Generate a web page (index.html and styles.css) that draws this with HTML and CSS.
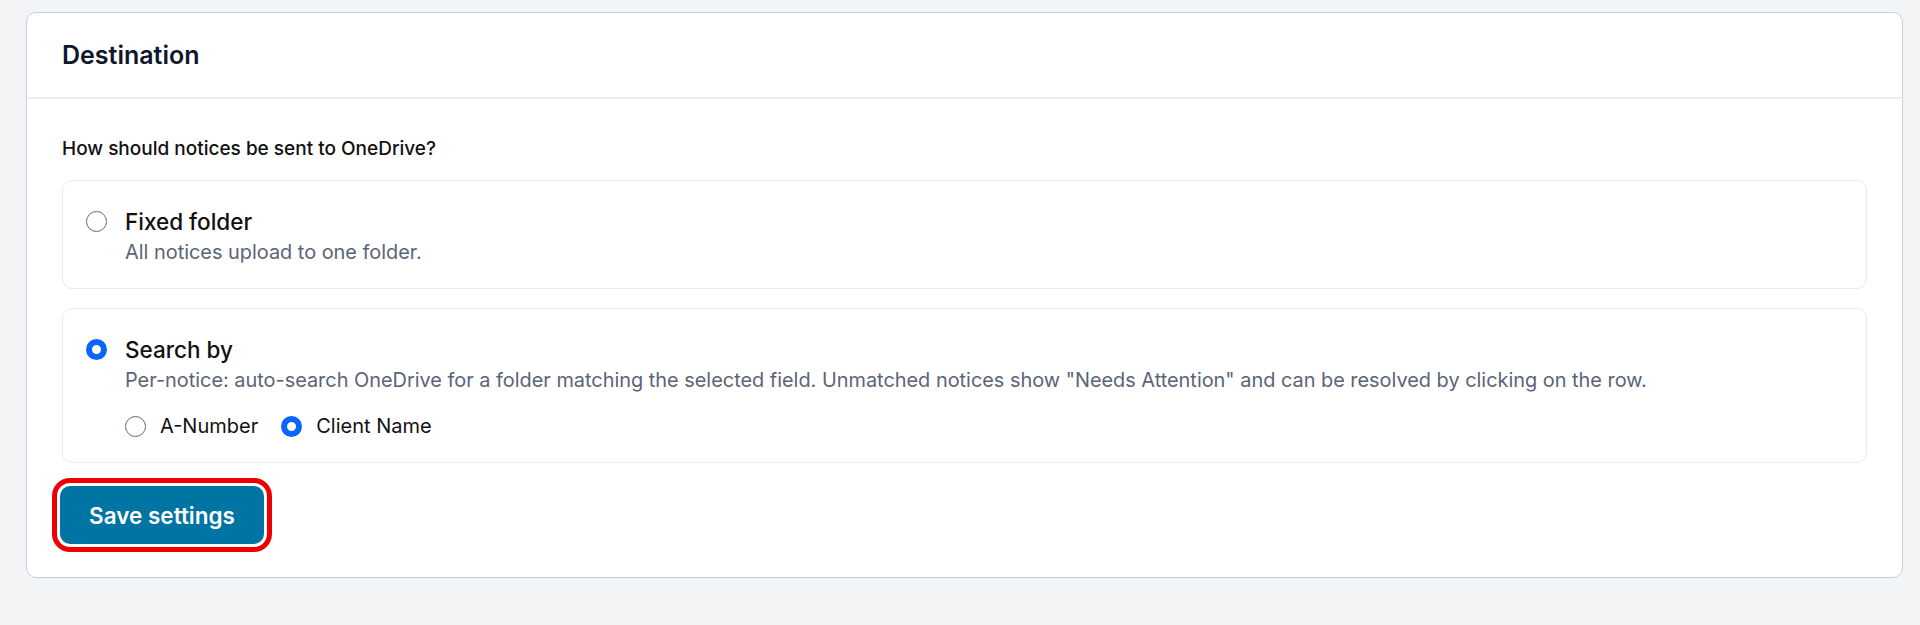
FILE: index.html
```html
<!DOCTYPE html>
<html>
<head>
  <link rel="stylesheet" href="styles.css">
</head>
<body>
  <div class="card">
    <!-- Header -->
    <div class="card-header">
      <h2>Destination</h2>
    </div>

    <div class="card-body">
      <p class="question">How should notices be sent to OneDrive?</p>

      <!-- Fixed folder -->
      <label class="option">
        <input type="radio" name="mode" class="radio">
        <div class="option-text">
          <span class="option-title">Fixed folder</span>
          <span class="option-desc">All notices upload to one folder.</span>
        </div>
      </label>

      <!-- Search by -->
      <label class="option">
        <input type="radio" name="mode" class="radio" checked>
        <div class="option-text">
          <span class="option-title">Search by</span>
          <span class="option-desc">Per-notice: auto-search OneDrive for a folder matching the selected field. Unmatched notices show "Needs Attention" and can be resolved by clicking on the row.</span>
          <div class="sub-options">
            <label class="sub-option">
              <input type="radio" name="field" class="radio">
              A-Number
            </label>
            <label class="sub-option">
              <input type="radio" name="field" class="radio" checked>
              Client Name
            </label>
          </div>
        </div>
      </label>

      <button class="save-btn">Save settings</button>
    </div>
  </div>
</body>
</html>
```

FILE: styles.css
```css
* {
  margin: 0;
  padding: 0;
  box-sizing: border-box;
}

body {
  background: #f3f4f6;
  font-family: Inter, "Noto Sans", sans-serif;
  color: #111827;
  padding: 12px 17px 0 26px;
}

.card {
  background: #fff;
  border: 1px solid #c3d1e4;
  border-radius: 10px;
}

/* Header */
.card-header {
  height: 86px;
  padding: 0 35px;
  display: flex;
  align-items: center;
  border-bottom: 2px solid #eceef1;
}

.card-header h2 {
  font-size: 25px;
  font-weight: 600;
  color: #0f172a;
}

/* Body */
.card-body {
  padding: 38px 35px 33px;
  display: flex;
  flex-direction: column;
  align-items: flex-start;
}

.question {
  font-size: 19px;
  font-weight: 500;
  line-height: 24px;
  margin-bottom: 19px;
  color: #111;
}

.option {
  width: 100%;
  display: flex;
  align-items: flex-start;
  gap: 18px;
  padding: 26px 23px 21px;
  border: 1px solid #e8eaee;
  border-radius: 10px;
  margin-bottom: 19px;
}

.option + .option {
  margin-bottom: 23px;
}

.option-text {
  display: flex;
  flex-direction: column;
}

.option-title {
  font-size: 22.5px;
  font-weight: 500;
  line-height: 30px;
  color: #111;
}

.option-desc {
  font-size: 19.9px;
  line-height: 30px;
  color: #5b6477;
}

/* Radios */
.radio {
  appearance: none;
  flex-shrink: 0;
  width: 21px;
  height: 21px;
  border: 1.5px solid #5d6679;
  border-radius: 50%;
  background: #fff;
  margin-top: 4px;
}

.radio:checked {
  border: 6px solid #0866ff;
  background: #fff;
}

.sub-options {
  display: flex;
  gap: 23px;
  margin-top: 16px;
  line-height: 30px;
}

.sub-option {
  display: flex;
  align-items: center;
  gap: 14px;
  font-size: 20px;
  color: #111;
}

.sub-option .radio {
  margin-top: 0;
}

/* Button */
.save-btn {
  background: #0074a3;
  color: #fff;
  font-family: inherit;
  font-size: 22.5px;
  font-weight: 600;
  width: 204px;
  height: 58px;
  border: none;
  border-radius: 10px;
  box-shadow: 0 0 0 3px #fff, 0 0 0 8px #ee0000;
  margin-left: -2px;
}
```
